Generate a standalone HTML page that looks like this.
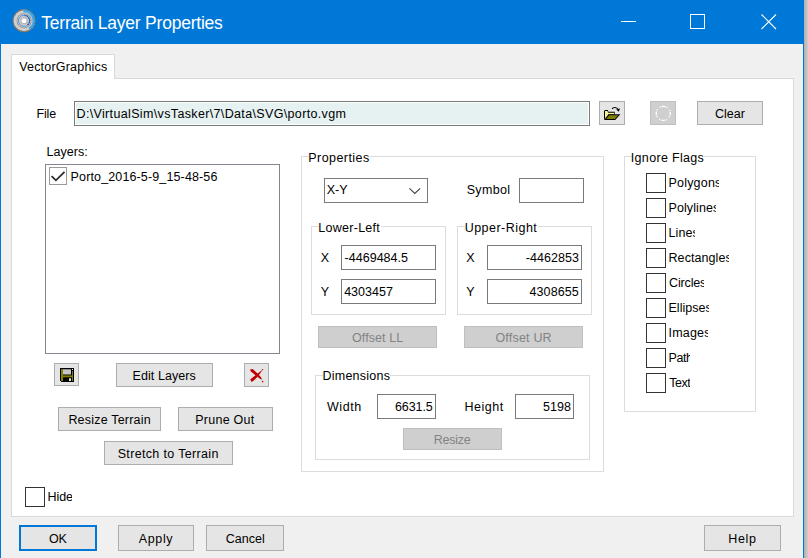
<!DOCTYPE html>
<html><head><meta charset="utf-8"><title>Terrain Layer Properties</title>
<style>
html,body{margin:0;padding:0}
body{width:808px;height:558px;overflow:hidden;position:relative;background:#f0f0f0;font-family:"Liberation Sans",sans-serif;font-size:12.5px;color:#000}
.a{position:absolute;box-sizing:border-box}
.t{position:absolute;white-space:pre;line-height:16px;display:block}
.btn{background:#e5e5e5;border:1px solid #adadad}
.dis{background:#cfcfcf;border:1px solid #bfbfbf}
.inp{background:#fff;border:1px solid #7a7a7a}
.grp{border:1px solid #dcdcdc}
.cb{background:#fff;border:1px solid #333;width:20px;height:20px}
.lbl{background:#fff;height:14px}
</style></head><body>
<!-- window frame -->
<div class="a" style="left:0;top:0;width:804px;height:558px;background:#0078d7"></div>
<div class="a" style="left:804px;top:0;width:4px;height:558px;background:linear-gradient(90deg,#b4aeae,#cdcdcd)"></div>
<div class="a" style="left:1px;top:44px;width:802px;height:514px;background:#f0f0f0"></div>
<!-- title icon -->
<svg class="a" style="left:12px;top:9px" width="24" height="24" viewBox="0 0 24 24">
<circle cx="12.1" cy="11.7" r="11.6" fill="#7c7670"/>
<circle cx="12.1" cy="11.7" r="10.5" fill="#cfcfcf"/>
<path d="M11.4 1.9 A9.8 9.8 0 0 1 17.4 19.9" fill="none" stroke="#3aa6e8" stroke-width="2.8"/>
<path d="M15.6 0.9 A11.3 11.3 0 0 1 19.4 20.2" fill="none" stroke="#5a5a5a" stroke-width="0.9" stroke-dasharray="1.3 1.9"/>
<circle cx="12.1" cy="11.7" r="7.5" fill="#8f8f8f"/>
<circle cx="12.1" cy="11.7" r="6.7" fill="#d6d6d6"/>
<circle cx="12.1" cy="11.7" r="5.6" fill="none" stroke="#2f78cc" stroke-width="0.8"/>
<path d="M12.6 6.4 A5.3 5.3 0 0 1 15.2 16.1" fill="none" stroke="#1d62c2" stroke-width="1.5" stroke-dasharray="1.6 0.6"/>
<circle cx="12.1" cy="11.7" r="4.4" fill="#c4c4c4"/>
<circle cx="12.1" cy="11.7" r="3.4" fill="#b4b4b4"/>
<rect x="9.7" y="9.4" width="4.6" height="4.6" rx="1.6" fill="#fff"/>
</svg>
<!-- caption buttons -->
<svg class="a" style="left:610px;top:0" width="194" height="44" viewBox="0 0 194 44" shape-rendering="crispEdges">
<rect x="11" y="21" width="15" height="1" fill="#fff"/>
<rect x="80.5" y="14.5" width="14" height="14" fill="none" stroke="#fff" stroke-width="1"/>
<g shape-rendering="geometricPrecision" stroke="#fff" stroke-width="1.1" fill="none"><path d="M151.5 14.5 L166 29 M166 14.5 L151.5 29"/></g>
</svg>
<!-- tab pane -->
<div class="a" style="left:11px;top:78px;width:783px;height:439px;background:#fff;border:1px solid #d9d9d9"></div>
<div class="a" style="left:11px;top:54px;width:104px;height:25px;background:#fff;border:1px solid #d9d9d9;border-bottom:none"></div>
<!-- file row -->
<div class="a inp" style="left:74px;top:101px;width:516px;height:25px;background:#e6f1f1;box-shadow:inset 0 0 0 1px #fff"></div>
<div class="a btn" style="left:599px;top:101px;width:26px;height:24px"></div>
<svg class="a" style="left:604px;top:106px" width="17" height="14" viewBox="0 0 17 14">
<path d="M8.1 3.0 C9 1.0 12.6 0.7 14.2 3.6" fill="none" stroke="#000" stroke-width="1.1"/>
<path d="M12.3 3.4 L16 2.5 L14.7 5.8 Z" fill="#000"/>
<path d="M0 13.8 V5 L1 4 H3.8 L4.4 5.8 H10.7 V8.6 H3.5 Z" fill="#000"/>
<path d="M1 12.6 V5.1 H3.4 L4.2 6.7 H10 V8.1 H4.4 Z" fill="#f6f690"/>
<path d="M4.5 8.3 H16.4 L11.2 13.9 H0 Z" fill="#000"/>
<path d="M5.3 9.2 H14.2 L10.8 13 H2 Z" fill="#808000"/>
</svg>
<div class="a dis" style="left:650px;top:101px;width:26px;height:24px"></div>
<svg class="a" style="left:654px;top:104px" width="18" height="18" viewBox="0 0 18 18"><circle cx="9.3" cy="9.4" r="7" fill="none" stroke="#fff" stroke-width="1.4" stroke-dasharray="3.9 1.1 1.2 2.7 1.2 0.9" stroke-dashoffset="1.95"/></svg>
<div class="a btn" style="left:697px;top:101px;width:66px;height:24px"></div>
<!-- layers -->
<div class="a" style="left:45px;top:164px;width:235px;height:190px;background:#fff;border:1px solid #828790"></div>
<div class="a" style="left:49px;top:167px;width:18px;height:18px;background:#fff;border:1px solid #9a9a9a"></div>
<svg class="a" style="left:49px;top:167px" width="18" height="18" viewBox="0 0 18 18"><path d="M2.6 9.2 L6.9 13.3 L15.5 4.9" fill="none" stroke="#2b2b2b" stroke-width="1.8"/></svg>
<div class="a btn" style="left:54px;top:363px;width:25px;height:23px"></div>
<svg class="a" style="left:60px;top:368px" width="14" height="14" viewBox="0 0 14 14" shape-rendering="crispEdges">
<rect x="0" y="0" width="14" height="14" fill="#000"/>
<rect x="1" y="1.3" width="2" height="11.6" fill="#808000"/>
<rect x="12" y="3" width="1" height="9.9" fill="#808000"/>
<rect x="1" y="7.4" width="12" height="2.1" fill="#808000" shape-rendering="geometricPrecision"/>
<rect x="3" y="1.3" width="8" height="5.2" fill="#c6c6c6" shape-rendering="geometricPrecision"/>
<rect x="12" y="1" width="1" height="1" fill="#fff"/>
<rect x="3" y="9.5" width="9" height="4.5" fill="#000" shape-rendering="geometricPrecision"/>
<rect x="9" y="10.4" width="1.9" height="2.5" fill="#fff" shape-rendering="geometricPrecision"/>
<rect x="0" y="13" width="1" height="1" fill="#e1e1e1"/>
</svg>
<div class="a btn" style="left:116px;top:363px;width:97px;height:24px"></div>
<div class="a btn" style="left:244px;top:363px;width:25px;height:24px"></div>
<svg class="a" style="left:249px;top:368px" width="16" height="16" viewBox="0 0 16 16">
<path d="M1 1.6 L3.6 1 L8.6 5.4 L11.8 9 L13.2 11.8 L10.6 10.4 L6.8 7.6 L1.8 3.6 Z" fill="#c00000"/>
<path d="M1.2 11.6 L2.6 14 L4.8 12.6 L9 8.2 L11.6 4.8 L13.8 1.6 L11 3.8 L7.4 6.4 Z" fill="#c00000"/>
<circle cx="13.6" cy="13.6" r="0.8" fill="#c00000"/><circle cx="13.6" cy="1.6" r="0.7" fill="#c00000"/>
</svg>
<div class="a btn" style="left:58px;top:407px;width:103px;height:24px"></div>
<div class="a btn" style="left:178px;top:407px;width:95px;height:24px"></div>
<div class="a btn" style="left:104px;top:441px;width:129px;height:24px"></div>
<div class="a cb" style="left:25px;top:487px"></div>
<!-- bottom buttons -->
<div class="a btn" style="left:19px;top:525px;width:78px;height:26px;border:2px solid #0078d7"></div>
<div class="a btn" style="left:118px;top:525px;width:76px;height:26px"></div>
<div class="a btn" style="left:206px;top:525px;width:78px;height:26px"></div>
<div class="a btn" style="left:704px;top:525px;width:77px;height:26px"></div>
<!-- properties group -->
<div class="a grp" style="left:301px;top:156px;width:303px;height:316px"></div>
<div class="a lbl" style="left:309px;top:150px;width:61px"></div>
<div class="a inp" style="left:324px;top:178px;width:104px;height:25px"></div>
<svg class="a" style="left:408px;top:187px" width="14" height="8" viewBox="0 0 14 8"><path d="M1.4 1.4 L6.8 6.4 L12.2 1.4" fill="none" stroke="#444" stroke-width="1.1"/></svg>
<div class="a inp" style="left:519px;top:178px;width:65px;height:25px"></div>
<div class="a grp" style="left:311px;top:226px;width:135px;height:89px"></div>
<div class="a lbl" style="left:319px;top:220px;width:62px"></div>
<div class="a inp" style="left:341px;top:245px;width:95px;height:25px"></div>
<div class="a inp" style="left:341px;top:279px;width:95px;height:25px"></div>
<div class="a grp" style="left:457px;top:226px;width:135px;height:89px"></div>
<div class="a lbl" style="left:465px;top:220px;width:73px"></div>
<div class="a inp" style="left:487px;top:245px;width:95px;height:25px"></div>
<div class="a inp" style="left:487px;top:279px;width:95px;height:25px"></div>
<div class="a dis" style="left:318px;top:326px;width:119px;height:22px"></div>
<div class="a dis" style="left:464px;top:326px;width:119px;height:22px"></div>
<div class="a grp" style="left:315px;top:375px;width:275px;height:85px"></div>
<div class="a lbl" style="left:323px;top:369px;width:67px"></div>
<div class="a inp" style="left:377px;top:394px;width:59px;height:25px"></div>
<div class="a inp" style="left:515px;top:394px;width:59px;height:25px"></div>
<div class="a dis" style="left:403px;top:428px;width:99px;height:22px"></div>
<!-- ignore flags -->
<div class="a grp" style="left:624px;top:156px;width:132px;height:256px"></div>
<div class="a lbl" style="left:632px;top:150px;width:72px"></div>
<div class="a cb" style="left:646px;top:173px"></div>
<div class="a cb" style="left:646px;top:198px"></div>
<div class="a cb" style="left:646px;top:223px"></div>
<div class="a cb" style="left:646px;top:248px"></div>
<div class="a cb" style="left:646px;top:273px"></div>
<div class="a cb" style="left:646px;top:298px"></div>
<div class="a cb" style="left:646px;top:323px"></div>
<div class="a cb" style="left:646px;top:348px"></div>
<div class="a cb" style="left:646px;top:373px"></div>
<!-- texts -->
<span class="t" id="title" style="left:41.25px;top:13px;letter-spacing:-0.226px;color:#fff;font-size:17.5px;line-height:20px;">Terrain Layer Properties</span>
<span class="t" id="tab" style="left:19.15px;top:59px;letter-spacing:0.204px;">VectorGraphics</span>
<span class="t" id="file" style="left:36.40px;top:106px;letter-spacing:-0.100px;">File</span>
<span class="t" id="path" style="left:76.50px;top:106px;letter-spacing:0.350px;">D:\VirtualSim\vsTasker\7\Data\SVG\porto.vgm</span>
<span class="t" id="clear" style="left:715.00px;top:106px;letter-spacing:-0.012px;">Clear</span>
<span class="t" id="layers" style="left:46.40px;top:144px;letter-spacing:0.067px;">Layers:</span>
<span class="t" id="porto" style="left:70.60px;top:169px;letter-spacing:0.134px;">Porto_2016-5-9_15-48-56</span>
<span class="t" id="edit" style="left:132.60px;top:368px;letter-spacing:0.070px;">Edit Layers</span>
<span class="t" id="resizet" style="left:68.40px;top:412px;letter-spacing:0.200px;">Resize Terrain</span>
<span class="t" id="prune" style="left:195.20px;top:412px;letter-spacing:0.263px;">Prune Out</span>
<span class="t" id="stretch" style="left:117.65px;top:446px;letter-spacing:0.341px;">Stretch to Terrain</span>
<span class="t" id="hide" style="left:47.50px;top:489px;letter-spacing:-0.050px;width:24.50px;overflow:hidden;">Hide</span>
<span class="t" id="ok" style="left:49.10px;top:531px;letter-spacing:-0.350px;">OK</span>
<span class="t" id="apply" style="left:138.85px;top:531px;letter-spacing:0.613px;">Apply</span>
<span class="t" id="cancel" style="left:225.70px;top:531px;letter-spacing:0.030px;">Cancel</span>
<span class="t" id="help" style="left:728.30px;top:531px;letter-spacing:0.617px;">Help</span>
<span class="t" id="props" style="left:308.30px;top:150px;letter-spacing:0.433px;">Properties</span>
<span class="t" id="xy" style="left:326.80px;top:182px;letter-spacing:-0.075px;">X-Y</span>
<span class="t" id="symbol" style="left:466.65px;top:182px;letter-spacing:0.350px;">Symbol</span>
<span class="t" id="ll" style="left:318.20px;top:220px;letter-spacing:0.289px;">Lower-Left</span>
<span class="t" id="ur" style="left:464.65px;top:220px;letter-spacing:0.480px;">Upper-Right</span>
<span class="t" id="llx" style="left:320.70px;top:250px;letter-spacing:0.000px;">X</span>
<span class="t" id="lly" style="left:320.70px;top:284px;letter-spacing:0.000px;">Y</span>
<span class="t" id="llxv" style="left:344.60px;top:250px;letter-spacing:0.017px;">-4469484.5</span>
<span class="t" id="llyv" style="left:344.15px;top:284px;letter-spacing:0.025px;">4303457</span>
<span class="t" id="urx" style="left:466.30px;top:250px;letter-spacing:0.000px;">X</span>
<span class="t" id="ury" style="left:466.30px;top:284px;letter-spacing:0.000px;">Y</span>
<span class="t" id="urxv" style="left:525.70px;top:250px;letter-spacing:0.050px;">-4462853</span>
<span class="t" id="uryv" style="left:529.55px;top:284px;letter-spacing:0.083px;">4308655</span>
<span class="t" id="offll" style="left:352.00px;top:330px;letter-spacing:0.094px;color:#838383;">Offset LL</span>
<span class="t" id="offur" style="left:495.40px;top:330px;letter-spacing:0.200px;color:#838383;">Offset UR</span>
<span class="t" id="dims" style="left:322.40px;top:368px;letter-spacing:0.261px;">Dimensions</span>
<span class="t" id="width" style="left:327.05px;top:399px;letter-spacing:0.525px;">Width</span>
<span class="t" id="widthv" style="left:394.90px;top:399px;letter-spacing:-0.070px;">6631.5</span>
<span class="t" id="height" style="left:464.40px;top:399px;letter-spacing:0.520px;">Height</span>
<span class="t" id="heightv" style="left:543.00px;top:399px;letter-spacing:0.050px;">5198</span>
<span class="t" id="resize" style="left:433.70px;top:432px;letter-spacing:-0.230px;color:#838383;">Resize</span>
<span class="t" id="flags" style="left:630.80px;top:150px;letter-spacing:0.318px;">Ignore Flags</span>
<span class="t" id="cb0" style="left:668.50px;top:175px;letter-spacing:0.200px;width:50.10px;overflow:hidden;">Polygons</span>
<span class="t" id="cb1" style="left:668.50px;top:200px;letter-spacing:0.093px;width:47.50px;overflow:hidden;">Polylines</span>
<span class="t" id="cb2" style="left:668.50px;top:225px;letter-spacing:0.100px;width:26.50px;overflow:hidden;">Lines</span>
<span class="t" id="cb3" style="left:668.50px;top:250px;letter-spacing:0.081px;width:60.40px;overflow:hidden;">Rectangles</span>
<span class="t" id="cb4" style="left:669.00px;top:275px;letter-spacing:-0.140px;width:34.70px;overflow:hidden;">Circles</span>
<span class="t" id="cb5" style="left:668.50px;top:300px;letter-spacing:0.008px;width:40.20px;overflow:hidden;">Ellipses</span>
<span class="t" id="cb6" style="left:668.50px;top:325px;letter-spacing:0.200px;width:39.20px;overflow:hidden;">Images</span>
<span class="t" id="cb7" style="left:668.50px;top:350px;letter-spacing:-0.425px;width:21.70px;overflow:hidden;">Path</span>
<span class="t" id="cb8" style="left:669.25px;top:375px;letter-spacing:-0.450px;width:20.65px;overflow:hidden;">Text</span>
</body></html>
